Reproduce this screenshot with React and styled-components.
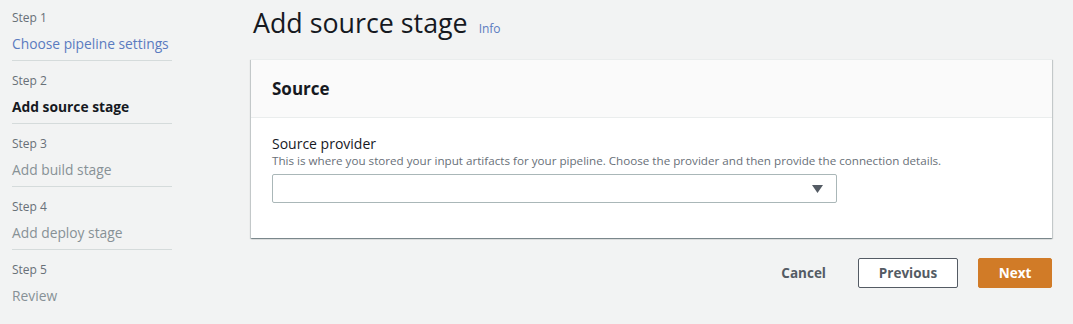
import React from "react";
import styled, { createGlobalStyle } from "styled-components";

const Global = createGlobalStyle`
  html, body { margin: 0; padding: 0; background: #f2f3f3; }
  body { font-family: "Open Sans", "Noto Sans", sans-serif; color: #16191f; }
  * { box-sizing: border-box; }
`;

const Page = styled.div`
  display: flex;
  width: 1073px;
  height: 324px;
  background: #f2f3f3;
`;

const Sidebar = styled.nav`
  width: 251px;
  padding: 0 0 0 12px;
  display: flex;
  flex-direction: column;
`;

const StepItem = styled.div`
  width: 160px;
  height: ${(p) => (p.first ? "61px" : "63px")};
  padding-top: ${(p) => (p.first ? "10px" : "12px")};
  border-bottom: ${(p) => (p.last ? "none" : "1px solid #d5dbdb")};
  display: flex;
  flex-direction: column;
`;

const StepLabel = styled.div`
  font-size: 12px;
  line-height: 16px;
  color: #687078;
`;

const StepTitle = styled.div`
  margin-top: 9px;
  font-size: 13.8px;
  line-height: 18px;
  font-weight: ${(p) => (p.state === "active" ? 700 : 400)};
  color: ${(p) =>
    p.state === "active" ? "#16191f" : p.state === "done" ? "#5a7bc0" : "#879196"};
`;

const Main = styled.main`
  flex: 1;
  padding: 4px 21px 0 0;
  display: flex;
  flex-direction: column;
`;

const TitleRow = styled.div`
  display: flex;
  align-items: baseline;
  padding-left: 2px;
  height: 55px;
`;

const Title = styled.h1`
  margin: 0;
  font-size: 26.8px;
  font-weight: 400;
  line-height: 37px;
  color: #16191f;
`;

const InfoLink = styled.a`
  margin-left: 11px;
  font-size: 12px;
  color: #5a7bc0;
  text-decoration: none;
`;

const Card = styled.section`
  background: #fff;
  box-shadow: 0 1px 1px 0 rgba(0, 28, 36, 0.3), 1px 1px 1px 0 rgba(0, 28, 36, 0.15),
    -1px 1px 1px 0 rgba(0, 28, 36, 0.15);
  border-top: 1px solid #eaeded;
`;

const CardHeader = styled.header`
  height: 58px;
  background: #fafafa;
  border-bottom: 1px solid #eaeded;
  display: flex;
  align-items: center;
  padding: 0 21px;
`;

const CardTitle = styled.h2`
  margin: 0;
  font-size: 17px;
  font-weight: 700;
  color: #16191f;
`;

const CardBody = styled.div`
  padding: 17px 21px 35px;
`;

const FieldLabel = styled.div`
  font-size: 14px;
  line-height: 18px;
  color: #16191f;
`;

const FieldHint = styled.div`
  font-size: 11.65px;
  line-height: 16px;
  color: #687078;
`;

const SelectBox = styled.div`
  margin-top: 5px;
  width: 565px;
  height: 29px;
  border: 1px solid #aab7b8;
  border-radius: 2px;
  background: #fff;
  display: flex;
  align-items: center;
  justify-content: flex-end;
  padding-right: 13px;
`;

const Caret = styled.svg`
  width: 11px;
  height: 8px;
  fill: #545b64;
`;

const Actions = styled.div`
  display: flex;
  justify-content: flex-end;
  align-items: center;
  gap: 20px;
  margin-top: 20px;
`;

const TextButton = styled.button`
  background: none;
  border: none;
  font-family: inherit;
  font-size: 13.5px;
  font-weight: 700;
  color: #545b64;
  padding: 0;
  height: 29px;
  margin-right: 12px;
`;

const Button = styled.button`
  height: 30px;
  width: ${(p) => (p.primary ? "74px" : "100px")};
  padding: 0;
  font-family: inherit;
  font-size: 13.5px;
  font-weight: 700;
  border-radius: 2px;
  border: 1px solid ${(p) => (p.primary ? "#d17b27" : "#545b64")};
  background: ${(p) => (p.primary ? "#d17b27" : "#fff")};
  color: ${(p) => (p.primary ? "#fff" : "#545b64")};
`;

const steps = [
  { n: 1, t: "Choose pipeline settings", s: "done" },
  { n: 2, t: "Add source stage", s: "active" },
  { n: 3, t: "Add build stage", s: "todo" },
  { n: 4, t: "Add deploy stage", s: "todo" },
  { n: 5, t: "Review", s: "todo" },
];

export default function App() {
  return (
    <Page>
      <Global />
      <Sidebar>
        {steps.map((st, i) => (
          <StepItem key={st.n} first={i === 0} last={i === steps.length - 1}>
            <StepLabel>Step {st.n}</StepLabel>
            <StepTitle state={st.s}>{st.t}</StepTitle>
          </StepItem>
        ))}
      </Sidebar>
      <Main>
        <TitleRow>
          <Title>Add source stage</Title>
          <InfoLink href="#">Info</InfoLink>
        </TitleRow>
        <Card>
          <CardHeader>
            <CardTitle>Source</CardTitle>
          </CardHeader>
          <CardBody>
            <FieldLabel>Source provider</FieldLabel>
            <FieldHint>
              This is where you stored your input artifacts for your pipeline. Choose the provider
              and then provide the connection details.
            </FieldHint>
            <SelectBox>
              <Caret viewBox="0 0 11 8">
                <polygon points="0,0 11,0 5.5,8" />
              </Caret>
            </SelectBox>
          </CardBody>
        </Card>
        <Actions>
          <TextButton>Cancel</TextButton>
          <Button>Previous</Button>
          <Button primary>Next</Button>
        </Actions>
      </Main>
    </Page>
  );
}
